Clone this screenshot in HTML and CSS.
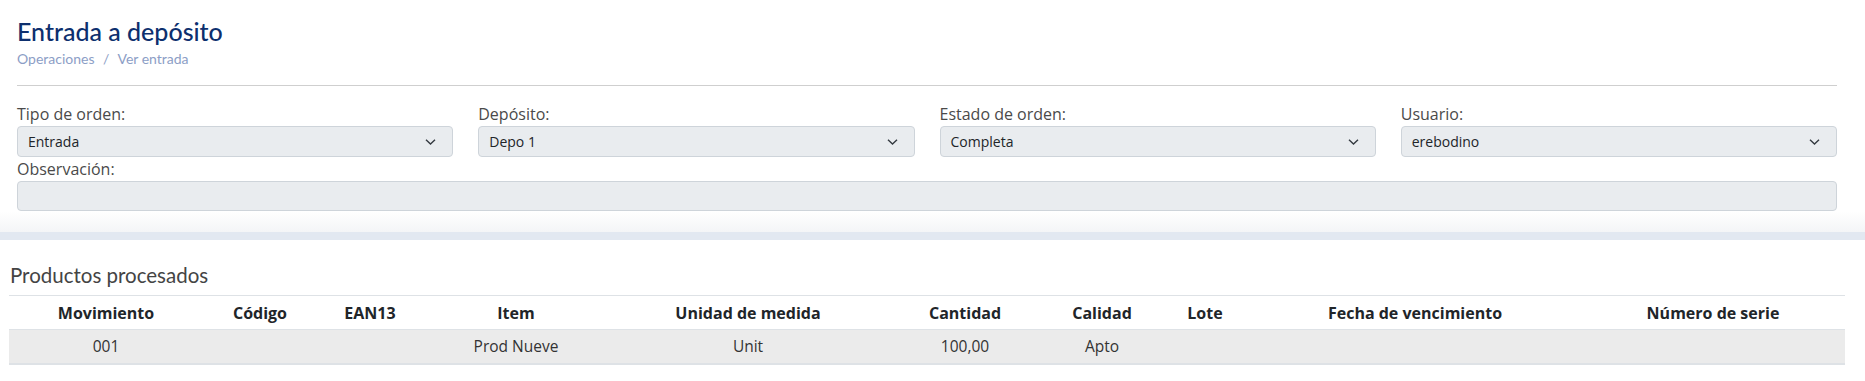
FILE: index.html
```html
<!DOCTYPE html>
<html lang="es">
<head>
<meta charset="utf-8">
<title>Entrada a depósito</title>
<link rel="stylesheet" href="styles.css">
</head>
<body>
<section class="top-card">
  <header class="page-header">
    <h1 class="page-title">Entrada a depósito</h1>
    <nav class="breadcrumb">Operaciones <span class="sep">/</span> Ver entrada</nav>
  </header>
  <hr class="divider">
  <div class="form-grid">
    <div class="field">
      <label class="field-label">Tipo de orden:</label>
      <div class="select"><span>Entrada</span><svg class="chev" width="11" height="6" viewBox="0 0 11 6"><path d="M1 0.8 5.5 5 10 0.8" fill="none" stroke="#343a40" stroke-width="1.4"/></svg></div>
    </div>
    <div class="field">
      <label class="field-label">Depósito:</label>
      <div class="select"><span>Depo 1</span><svg class="chev" width="11" height="6" viewBox="0 0 11 6"><path d="M1 0.8 5.5 5 10 0.8" fill="none" stroke="#343a40" stroke-width="1.4"/></svg></div>
    </div>
    <div class="field">
      <label class="field-label">Estado de orden:</label>
      <div class="select"><span>Completa</span><svg class="chev" width="11" height="6" viewBox="0 0 11 6"><path d="M1 0.8 5.5 5 10 0.8" fill="none" stroke="#343a40" stroke-width="1.4"/></svg></div>
    </div>
    <div class="field">
      <label class="field-label">Usuario:</label>
      <div class="select"><span>erebodino</span><svg class="chev" width="11" height="6" viewBox="0 0 11 6"><path d="M1 0.8 5.5 5 10 0.8" fill="none" stroke="#343a40" stroke-width="1.4"/></svg></div>
    </div>
    <div class="field field-wide">
      <label class="field-label">Observación:</label>
      <div class="input"></div>
    </div>
  </div>
</section>
<div class="band"></div>
<section class="bottom-card">
  <h2 class="section-title">Productos procesados</h2>
  <table class="data-table">
    <colgroup>
      <col style="width:194px"><col style="width:114px"><col style="width:106px"><col style="width:186px"><col style="width:278px"><col style="width:156px"><col style="width:118px"><col style="width:88px"><col style="width:332px"><col style="width:264px">
    </colgroup>
    <thead>
      <tr><th>Movimiento</th><th>Código</th><th>EAN13</th><th>Item</th><th>Unidad de medida</th><th>Cantidad</th><th>Calidad</th><th>Lote</th><th>Fecha de vencimiento</th><th>Número de serie</th></tr>
    </thead>
    <tbody>
      <tr><td>001</td><td></td><td></td><td>Prod Nueve</td><td>Unit</td><td>100,00</td><td>Apto</td><td></td><td></td><td></td></tr>
    </tbody>
  </table>
</section>
</body>
</html>
```
FILE: styles.css
```css
* { box-sizing: border-box; }
body {
  margin: 0;
  background: #fff;
  font-family: "Open Sans", "Liberation Sans", sans-serif;
  color: #212529;
}
.top-card {
  padding: 16px 28px 21px 17px;
  background: linear-gradient(to bottom, #fff 0, #fff 211px, #f4f5f7 100%);
}
.page-header { display: flex; flex-direction: column; }
.page-title {
  margin: 0;
  font-family: "Lato", "Noto Sans", sans-serif;
  font-weight: 500;
  font-size: 25px;
  line-height: 30px;
  color: #0d2f6e;
}
.breadcrumb {
  margin-top: 4px;
  font-family: "Lato", "Noto Sans", sans-serif;
  font-size: 14px;
  line-height: 18px;
  color: #8c9ec6;
}
.breadcrumb .sep { margin: 0 5px; }
.divider {
  margin: 17px 0 16px;
  border: 0;
  border-top: 1px solid #cfcfcf;
}
.form-grid {
  display: grid;
  grid-template-columns: repeat(4, 1fr);
  column-gap: 25px;
}
.field-wide { grid-column: 1 / -1; }
.field-label {
  display: block;
  font-size: 16px;
  line-height: 24px;
  color: #4a4a4a;
}
.select, .input {
  height: 31px;
  background: #e9ecef;
  border: 1px solid #ced4da;
  border-radius: 4px;
}
.select {
  display: flex;
  align-items: center;
  justify-content: space-between;
  padding: 0 16px 0 10px;
  font-size: 14px;
  color: #212529;
}
.input { height: 30px; }
.band { height: 8px; background: #e2e8f1; }
.bottom-card { padding: 22px 20px 17px 9px; }
.section-title {
  margin: 0 0 7px 1px;
  font-family: "Lato", "Noto Sans", sans-serif;
  font-weight: 400;
  font-size: 20.5px;
  line-height: 26px;
  color: #444;
}
.data-table {
  width: 1836px;
  table-layout: fixed;
  border-collapse: collapse;
  font-size: 16px;
  color: #212529;
}
.data-table th, .data-table td {
  text-align: center;
  padding: 6px 4px;
  line-height: 20px;
}
.data-table th {
  font-weight: 700;
  font-stretch: 90%;
  border-top: 1px solid #dee2e6;
  border-bottom: 1px solid #dee2e6;
  height: 34px;
}
.data-table td {
  background: #ebebeb;
  height: 34px;
  font-size: 15.5px;
  font-stretch: 93%;
  border-bottom: 2px solid #dee2e6;
  color: #333;
}
```
